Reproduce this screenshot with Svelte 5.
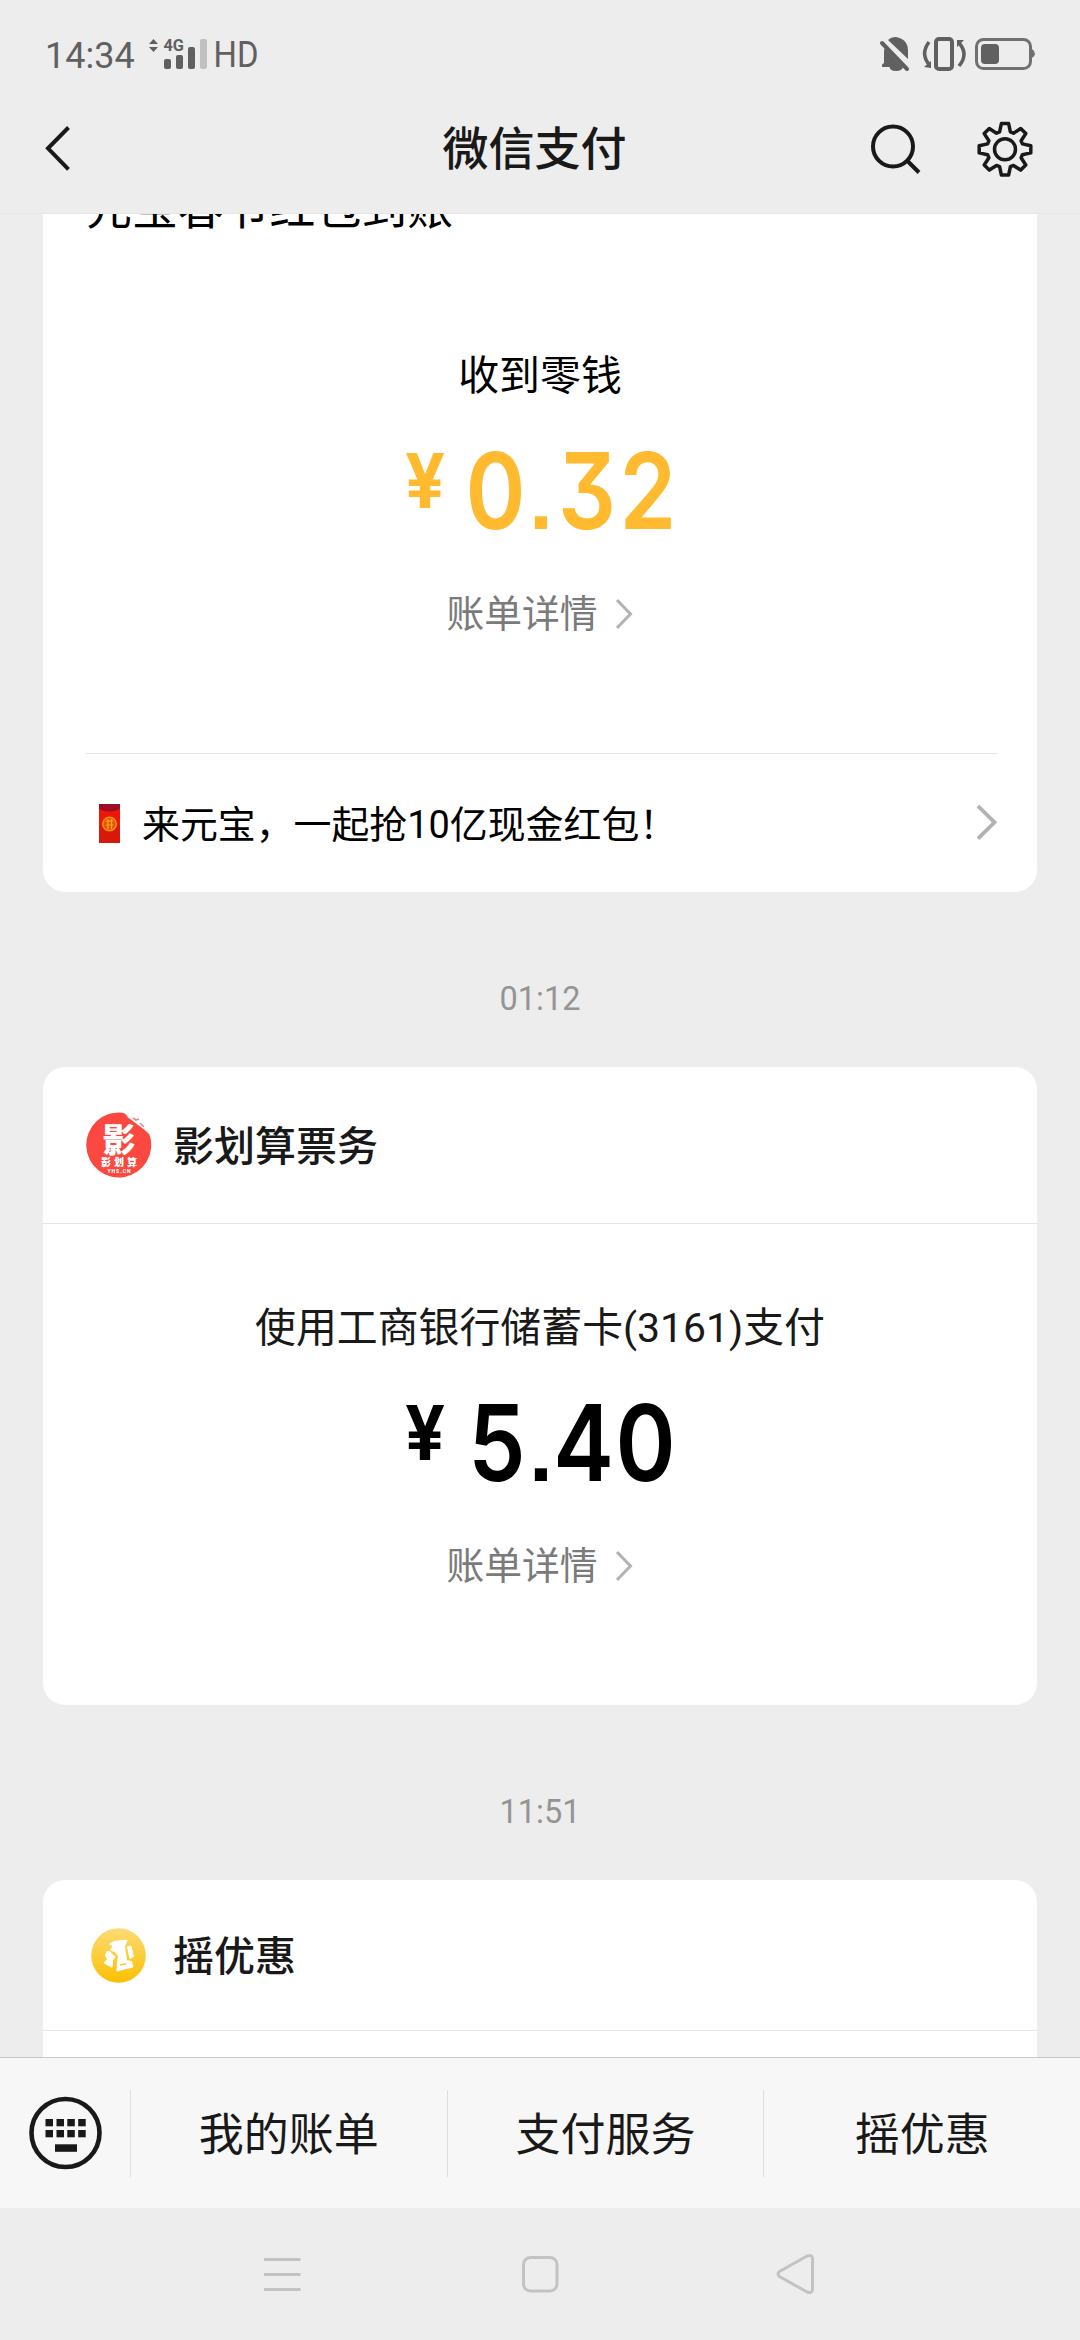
<script>
	const menu = ["我的账单", "支付服务", "摇优惠"];

	const keys = [45.5, 56.5, 67.3, 78.2];

	// outline of the settings gear, eight teeth around 0,0
	function gearPath() {
		const tooth = [[-5.4, -17.4], [-3.6, -25.8], [3.6, -25.8], [5.4, -17.4]];
		const points = [];
		for (let i = 0; i < 8; i++) {
			const a = (i * Math.PI) / 4;
			for (const [x, y] of tooth) {
				const px = x * Math.cos(a) - y * Math.sin(a);
				const py = x * Math.sin(a) + y * Math.cos(a);
				points.push(px.toFixed(2) + " " + py.toFixed(2));
			}
		}
		return "M" + points.join("L") + "Z";
	}

	const gear = gearPath();
</script>

{#snippet payment(label, digits, xs, kind)}
	<div class="label {kind}">{label}</div>
	<svg class="amount {kind}" width="320" height="183" viewBox="380 0 320 183">
		<text class="yen" transform="translate(425 105) scale(0.94 1)" text-anchor="middle">¥</text>
		{#each digits as d, i}
			{#if d === "."}
				<text class="point" x={xs[i]} y="126" text-anchor="middle">.</text>
			{:else}
				<text class="digit" transform="translate({xs[i]} 126) scale(0.86 1)" text-anchor="middle">{d}</text>
			{/if}
		{/each}
	</svg>
	<div class="detail">
		<span>账单详情</span>
		<svg width="20" height="34" viewBox="0 0 20 34"><path d="M3 3L16.500 17L3 31" fill="none" stroke="#b2b2b2" stroke-width="3" /></svg>
	</div>
{/snippet}

<div class="screen">
	<header>
		<div class="status">
			<span class="clock">14:34</span>
			<svg class="signal" width="115" height="40" viewBox="145 35 115 40">
				<path d="M149 44L153.500 39L158 44ZM149 47L153.500 52L158 47Z" fill="#606060" />
				<text x="163.500" y="51" font-size="16.500" font-weight="700" textLength="20.500" lengthAdjust="spacingAndGlyphs">4G</text>
				<rect x="164" y="59" width="7" height="10" rx="2" />
				<rect x="176" y="55" width="7" height="14" rx="2" />
				<rect x="188" y="47" width="7" height="22" rx="2" />
				<rect x="200" y="39" width="7" height="30" rx="2" fill="#c0c0c0" />
				<text x="213.500" y="67" font-size="36" textLength="45" lengthAdjust="spacingAndGlyphs">HD</text>
			</svg>
			<svg class="system" width="160" height="40" viewBox="878 35 160 40">
				<path d="M884 65V54Q884 50 884.500 48L902.500 67H903Q902 71 896 71Q890 71 889.500 67H882V65Q882 64 884 63ZM888 40Q891 37 896 37Q908 39 908 51V59Z" fill="#606060" />
				<path d="M882 43L907 69" fill="none" stroke="#606060" stroke-width="4" stroke-linecap="round" />
				<rect x="936" y="39" width="16" height="30" rx="3" fill="none" stroke="#606060" stroke-width="4" />
				<path d="M929 42Q920 54 929.500 65M959 66Q969 54 959 43" fill="none" stroke="#606060" stroke-width="3.500" />
				<path d="M924 67L931 61V68ZM957 40H964L957 47Z" fill="#606060" />
				<rect x="976.500" y="39.500" width="54" height="29" rx="7" fill="none" stroke="#707070" stroke-width="3" />
				<path d="M1032 49Q1035 51 1035 54Q1035 56 1032 58Z" fill="#707070" />
				<rect x="981" y="44" width="18" height="20" rx="4" fill="#606060" />
			</svg>
		</div>
		<div class="titlebar">
			<svg width="30" height="50" viewBox="43 124 30 50"><path d="M68.500 128.500L48 149.300L68.500 170.300" fill="none" stroke="#191919" stroke-width="4" /></svg>
			<h1>微信支付</h1>
			<svg class="tools" width="170" height="60" viewBox="868 118 170 60">
				<g fill="none" stroke="#191919" stroke-width="4">
					<circle cx="893" cy="146.500" r="20" />
					<path d="M907.500 161L919 172.500" />
					<g transform="translate(1005 149.300)" stroke-width="3.500" stroke-linejoin="round">
						<path d={gear} />
						<circle r="10.500" />
					</g>
				</g>
			</svg>
		</div>
	</header>

	<main>
		<section class="card first">
			<h2>元宝春节红包到账</h2>
			{@render payment("收到零钱", "0.32", [495.5, 541, 587, 648], "income")}
			<div class="promo">
				<svg width="21" height="39" viewBox="0 0 21 39">
					<rect width="21" height="39" fill="#d7180b" />
					<rect y="5" width="21" height="17" fill="#ee1608" />
					<path d="M0 0H21V5Q10 10 0 5Z" fill="#9c0d25" />
					<circle cx="10.500" cy="20" r="6.800" fill="#e8500c" stroke="#f2920f" stroke-width="1.500" />
					<path d="M6.500 17H14.500M7 21H14.500M9 15V25M12.500 15V25" stroke="#f5a51b" stroke-width="1.200" />
				</svg>
				<span>来元宝，一起抢10亿现金红包！</span>
				<svg class="more" width="24" height="40" viewBox="0 0 24 40"><path d="M5 3L21.500 19.300L5 35.600" fill="none" stroke="#b2b2b2" stroke-width="3.800" /></svg>
			</div>
		</section>

		<time>01:12</time>

		<section class="card">
			<div class="merchant tall">
				<svg width="66" height="66" viewBox="0 0 66 66">
					<path d="M36.500 .7A32.500 32.500 0 1 0 63.500 22.500Q61 20 57.500 17L42 5.500Q40 1.500 36.500 .7Z" fill="#fb4840" />
					<path d="M47 6L50 8L53 7M54 11L58 15" fill="none" stroke="#d98a98" stroke-width="1.600" />
					<text class="logo" x="33" y="40" font-size="33">影</text>
					<text class="logo" x="34.500" y="54" font-size="10" letter-spacing="3">影划算</text>
					<text class="logo" x="33.500" y="61" font-size="5" letter-spacing="1">YHS.CN</text>
				</svg>
				<span>影划算票务</span>
			</div>
			{@render payment("使用工商银行储蓄卡(3161)支付", "5.40", [497, 541, 583.5, 645.5], "expense")}
		</section>

		<time>11:51</time>

		<section class="card last">
			<div class="merchant">
				<svg width="66" height="66" viewBox="0 0 66 66">
					<defs>
						<linearGradient id="gold" x1="0" y1="0" x2="0" y2="1">
							<stop offset="0" stop-color="#fbdc75" />
							<stop offset="1" stop-color="#fcbf02" />
						</linearGradient>
					</defs>
					<circle cx="33.500" cy="33.500" r="27.300" fill="url(#gold)" />
					<g fill="#fff" stroke="#fff" stroke-linejoin="round">
						<path d="M24.500 22L29 19.500L42 18.200L39.500 24.500L41.500 38.500L46.500 39.500L47.800 45L31.800 49L32.500 41L33.500 34L29.500 29.500L25.500 28L28 24Z" />
						<path d="M42.500 24.800L46 24L48.300 34.500L45 36.500Z" />
						<path d="M22 29.300L25.200 30L28 33.500L30.300 34.500L27.500 38.500L27 45.300L22 42.500L19 41L22.300 37.300L20.500 33Z" />
					</g>
					<path d="M35 43L41 41.800" stroke="#fcca25" stroke-width="1.600" />
				</svg>
				<span>摇优惠</span>
			</div>
		</section>
	</main>

	<footer>
		<div class="keyboard">
			<svg width="76" height="76" viewBox="28 2095 76 76">
				<circle cx="65.500" cy="2133" r="34" fill="none" stroke="#191919" stroke-width="4.600" />
				{#each keys as x}
					<rect {x} y="2119" width="7.500" height="7.300" fill="#191919" />
					<rect {x} y="2130" width="7.500" height="7.300" fill="#191919" />
				{/each}
				<rect x="55" y="2144.300" width="22" height="7.500" fill="#191919" />
			</svg>
		</div>
		{#each menu as item}
			<button>{item}</button>
		{/each}
	</footer>

	<nav>
		<svg width="560" height="60" viewBox="260 2244 560 60" fill="none" stroke="#c3c3c3" stroke-width="3">
			<path d="M264 2259.500H300.500M264 2274.500H300.500M264 2289.500H300.500" />
			<rect x="523.500" y="2257.500" width="33.500" height="33.500" rx="7" />
			<path d="M779.500 2271.500L807 2256Q812.500 2254 812.500 2259V2289Q812.500 2294 807 2292L779.500 2276.500Q776.500 2274 779.500 2271.500Z" />
		</svg>
	</nav>
</div>

<style>
	:global(body) {
		margin: 0;
		background: #ededed;
	}

	.screen {
		display: flex;
		flex-direction: column;
		width: 1080px;
		height: 2340px;
		overflow: hidden;
		background: #ededed;
		color: #191919;
		font-family: Roboto, "Noto Sans CJK SC", sans-serif;
	}

	svg {
		display: block;
		flex: none;
	}

	header {
		box-sizing: border-box;
		height: 214px;
		border-bottom: 1px solid #e6e6e6;
	}

	.status {
		display: flex;
		align-items: center;
		height: 110px;
		padding: 0 42px 0 45px;
		color: #606060;
	}

	.clock {
		width: 100px;
		padding-top: 2px;
		font-size: 36px;
	}

	.signal {
		fill: #606060;
		overflow: visible;
	}

	.system {
		margin-left: auto;
	}

	.titlebar {
		display: grid;
		grid-template-columns: 170px 1fr 170px;
		align-items: center;
		height: 76px;
		padding: 0 42px 0 43px;
	}

	h1 {
		margin: 0;
		padding: 2px 12px 0 0;
		font-size: 46px;
		font-weight: 500;
		line-height: 74px;
		text-align: center;
	}

	main {
		flex: 1;
		min-height: 0;
		overflow: hidden;
		padding: 0 43px;
	}

	.card {
		background: #fff;
		border-radius: 22px;
		overflow: hidden;
	}

	.first {
		margin-top: -84px;
		padding-top: 48px;
	}

	.last {
		height: 400px;
	}

	h2 {
		margin: 0;
		padding-left: 43px;
		color: #000;
		font-size: 45.9px;
		font-weight: 400;
		line-height: 60px;
	}

	.label {
		padding-top: 111px;
		font-size: 40.9px;
		line-height: 54px;
		text-align: center;
	}

	.label.income {
		color: #000;
	}

	.label.expense {
		padding-top: 77px;
	}

	.amount {
		margin: 0 auto;
		font-family: Inter, Roboto, sans-serif;
		font-feature-settings: "cv09";
	}

	.amount.income {
		fill: #ffba30;
	}

	.amount.expense {
		fill: #000;
	}

	.digit {
		font-size: 106px;
		font-weight: 600;
	}

	/* square decimal point */
	.point {
		font-family: "Liberation Sans", Arial, sans-serif;
		font-size: 86px;
		font-weight: 700;
	}

	.yen {
		font-size: 75px;
		font-weight: 700;
	}

	.detail {
		display: flex;
		align-items: center;
		justify-content: center;
		gap: 16px;
		padding: 0 0 111px 0;
		color: #7a7a7a;
		font-size: 37.8px;
		line-height: 56px;
	}

	.promo {
		display: flex;
		align-items: center;
		height: 138px;
		margin: 0 40px 0 43px;
		padding-left: 13px;
		border-top: 1px solid #e6e6e6;
		color: #000;
		font-size: 37.9px;
	}

	.promo span {
		padding: 0 0 4px 22px;
	}

	.more {
		margin-left: auto;
	}

	time {
		display: block;
		height: 137px;
		padding-top: 38px;
		color: #949494;
		font-size: 32.5px;
		line-height: 138px;
		text-align: center;
	}

	.merchant {
		display: flex;
		align-items: center;
		gap: 22px;
		height: 150px;
		padding-left: 42px;
		border-bottom: 1px solid #e6e6e6;
		font-size: 41px;
		font-weight: 500;
	}

	.merchant.tall {
		height: 156px;
		padding-left: 43px;
		gap: 21px;
	}

	.merchant span {
		padding-bottom: 4px;
	}

	.logo {
		fill: #fff;
		font-weight: 900;
		text-anchor: middle;
	}

	footer {
		display: flex;
		align-items: center;
		box-sizing: border-box;
		height: 151px;
		background: #f7f7f7;
		border-top: 1px solid #c8c8c8;
	}

	.keyboard {
		width: 102px;
		padding-left: 28px;
	}

	button {
		flex: 1;
		height: 87px;
		padding: 0 0 4px 0;
		border: 0;
		border-left: 1px solid #dedede;
		background: none;
		color: inherit;
		font-family: inherit;
		font-size: 45px;
	}

	nav {
		display: flex;
		align-items: center;
		justify-content: center;
		height: 132px;
	}
</style>
